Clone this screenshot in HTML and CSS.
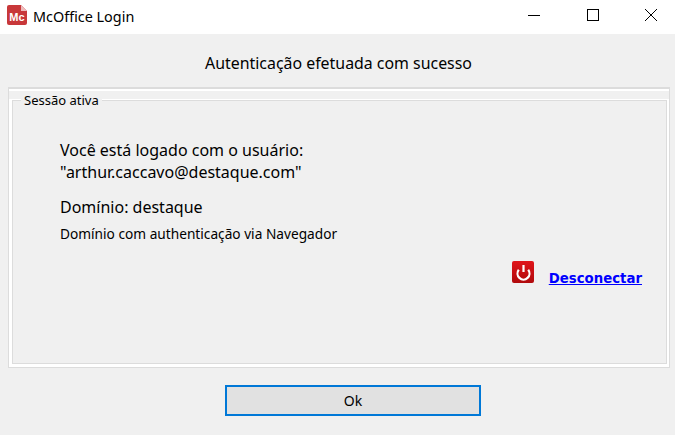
FILE: index.html
```html
<!DOCTYPE html>
<html lang="pt-BR">
<head>
    <meta charset="UTF-8">
    <title>McOffice Login</title>
    <link rel="stylesheet" href="styles.css">
</head>
<body>
    <header class="titlebar">
        <svg class="app-icon" width="20" height="20" viewBox="0 0 20 20">
            <path d="M0 2 Q0 0 2 0 H14 L20 6 V18 Q20 20 18 20 H2 Q0 20 0 18 Z" fill="#c8383a"/>
            <path d="M14 0 L20 6 H14 Z" fill="#eebcbc"/>
            <text x="10" y="16" class="app-icon-text" text-anchor="middle">Mc</text>
        </svg>
        <span class="titlebar-text">McOffice Login</span>
        <div class="window-buttons">
            <svg class="window-button" width="12" height="12" viewBox="0 0 12 12"><path d="M0 6.5 H12" stroke="#000" fill="none"/></svg>
            <svg class="window-button" width="12" height="12" viewBox="0 0 12 12"><rect x="0.5" y="0.5" width="11" height="11" stroke="#000" fill="none"/></svg>
            <svg class="window-button" width="12" height="12" viewBox="0 0 12 12"><path d="M0 0 L12 12 M12 0 L0 12" stroke="#000" fill="none"/></svg>
        </div>
    </header>

    <h1 class="status">Autenticação efetuada com sucesso</h1>

    <div class="group-outer">
        <div class="group">
            <span class="group-title">Sessão ativa</span>
            <p class="user-line">Você está logado com o usuário:<br>"arthur.caccavo@destaque.com"</p>
            <p class="domain">Domínio: destaque</p>
            <p class="domain-note">Domínio com authenticação via Navegador</p>
            <div class="disconnect">
                <svg width="22" height="22" viewBox="0 0 22 22">
                    <defs>
                        <linearGradient id="power-bg" x1="0" y1="0" x2="0" y2="1">
                            <stop offset="0" stop-color="#e0141a"/>
                            <stop offset="1" stop-color="#b00a0c"/>
                        </linearGradient>
                    </defs>
                    <rect x="0" y="0" width="22" height="22" rx="2" fill="url(#power-bg)"/>
                    <path d="M6.8 8.8 A6 6 0 1 0 16.2 8.8" stroke="#fff" stroke-width="2.2" fill="none"/>
                    <path d="M11.5 4 V11" stroke="#fff" stroke-width="2.2" fill="none"/>
                </svg>
                <a class="disconnect-link" href="#">Desconectar</a>
            </div>
        </div>
    </div>

    <div class="actions">
        <button class="ok-btn">Ok</button>
    </div>
</body>
</html>
```

FILE: styles.css
```css
html, body {
    height: 100%;
}

body {
    margin: 0;
    background: #f0f0f0;
    font-family: "Noto Sans", "Open Sans", sans-serif;
    color: #000;
    overflow: hidden;
}

.titlebar {
    display: flex;
    align-items: center;
    box-sizing: border-box;
    height: 34px;
    padding: 0 0 4px 7px;
    background: #fff;
}

.app-icon {
    margin-right: 6px;
}

.app-icon-text {
    font-family: "Liberation Sans", sans-serif;
    font-size: 11px;
    font-weight: bold;
    fill: #fff;
}

.titlebar-text {
    font-size: 14.4px;
    position: relative;
    top: 1px;
}

.window-buttons {
    display: flex;
    margin-left: auto;
    margin-right: 18px;
    gap: 46.5px;
}

.status {
    margin: 18px 0 0;
    padding-left: 2px;
    height: 35px;
    font-size: 15.9px;
    font-weight: normal;
    line-height: 22px;
    text-align: center;
}

.group-outer {
    box-sizing: border-box;
    margin: 0 5px 0 8px;
    height: 281px;
    padding: 11px 2px 3px 3px;
    border: 1px solid #dcdcdc;
    border-top-width: 2px;
    background: linear-gradient(#fff 2px, #f0f0f0 2px, #f0f0f0 10px, #fff 10px);
}

.group {
    position: relative;
    box-sizing: border-box;
    height: 100%;
    padding: 38px 47px 0;
    border: 1px solid #dcdcdc;
    background: #f0f0f0;
}

.group-title {
    position: absolute;
    top: -9px;
    left: 8px;
    padding: 0 3px;
    background: #f0f0f0;
    font-size: 13px;
    line-height: 17px;
}

.user-line {
    margin: 0 0 13px;
    font-size: 16px;
    line-height: 22px;
}

.domain {
    margin: 0 0 6px;
    font-size: 16px;
    line-height: 22px;
}

.domain-note {
    margin: 0;
    font-size: 13.7px;
    line-height: 20px;
}

.disconnect {
    display: flex;
    justify-content: flex-end;
    align-items: flex-start;
    gap: 15px;
    margin-top: 17px;
    margin-right: -23px;
}

.disconnect-link {
    margin-top: 9px;
    font-family: "DejaVu Sans", sans-serif;
    font-size: 13.3px;
    font-weight: bold;
    line-height: 18px;
    color: #0000ff;
}

.actions {
    display: flex;
    margin-top: 17px;
    padding-left: 225px;
}

.ok-btn {
    width: 256px;
    height: 31px;
    padding: 0;
    border: 2px solid #0078d7;
    background: #e1e1e1;
    font-family: inherit;
    font-size: 14px;
    color: #000;
}
```
